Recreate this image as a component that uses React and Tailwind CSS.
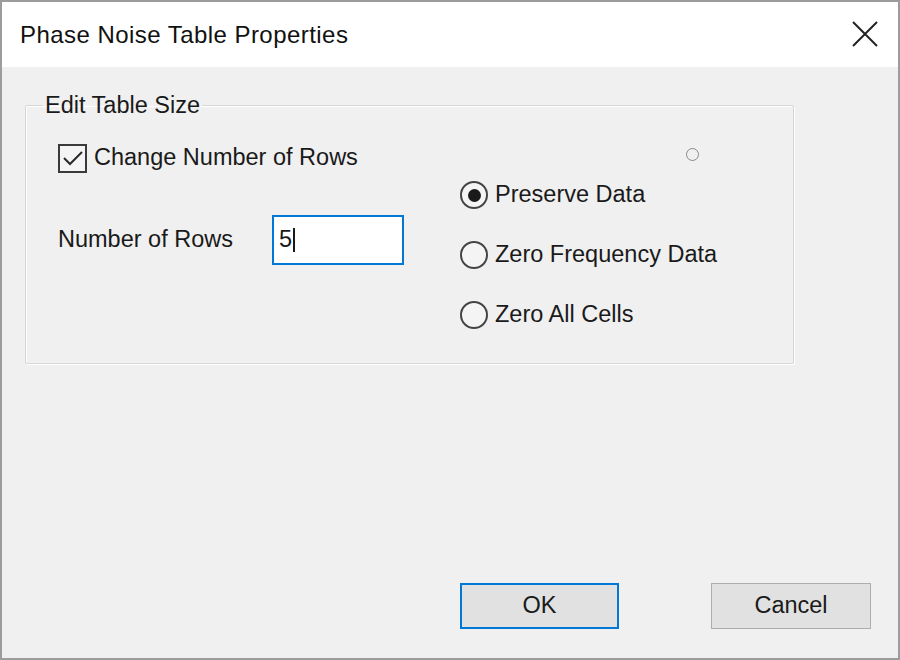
import React from 'react';

const font = { fontFamily: '"Liberation Sans", Arial, sans-serif' };

function Radio({ checked, label }) {
    return (
        <div className="flex items-center h-[30px]">
            <div className="w-[28px] h-[28px] rounded-full border-2 border-[#444] bg-[#f4f4f4] flex items-center justify-center">
                {checked && <div className="w-[13px] h-[13px] rounded-full bg-[#1a1a1a]" />}
            </div>
            <span className="ml-[7px] text-[23.5px] text-[#1a1a1a] leading-none">{label}</span>
        </div>
    );
}

export default function App() {
    return (
        <div className="w-[900px] h-[660px] flex flex-col border-2 border-[#9c9c9c] bg-[#f0f0f0] overflow-hidden" style={font}>
            {/* Title bar */}
            <div className="h-[65px] bg-white flex items-center justify-between pl-[18px] pr-[20px] shrink-0">
                <span className="text-[24px] text-[#111] tracking-[0.45px]">Phase Noise Table Properties</span>
                <svg width="26" height="26" viewBox="0 0 26 26" className="mb-[2px]">
                    <path d="M1 1 L25 25 M25 1 L1 25" stroke="#222" strokeWidth="2" fill="none" />
                </svg>
            </div>

            {/* Body */}
            <div className="flex-1 flex flex-col pt-[25px] pl-[23px] pr-[104px] pb-[29px]">
                <fieldset className="border border-[#d6d6d6] rounded-[2px] shadow-[inset_1px_1px_0_#fff,1px_1px_0_#fff]">
                    <legend className="ml-[17px] px-[2px] text-[23.5px] leading-[26px] text-[#1a1a1a]">Edit Table Size</legend>
                    <div className="flex h-[245px]">
                        {/* Left column */}
                        <div className="w-[434px] pl-[32px] pt-[25px] flex flex-col">
                            <div className="flex items-center h-[30px]">
                                <div className="w-[29px] h-[29px] border-2 border-[#3a3a3a] bg-[#f4f4f4] flex items-center justify-center">
                                    <svg width="22" height="18" viewBox="0 0 22 18">
                                        <path d="M2 9 L8 15 L20 3" stroke="#2a2a2a" strokeWidth="2" fill="none" />
                                    </svg>
                                </div>
                                <span className="ml-[7px] text-[23.5px] text-[#1a1a1a] leading-none">Change Number of Rows</span>
                            </div>
                            <div className="flex items-center h-[50px] mt-[42px]">
                                <span className="w-[214px] text-[23.5px] text-[#1a1a1a] leading-none">Number of Rows</span>
                                <div className="w-[132px] h-[50px] bg-white border-2 border-[#0078d7] flex items-center pl-[5px]">
                                    <span className="text-[23.5px] text-[#1a1a1a] leading-none">5</span>
                                    <span className="w-[2px] h-[24px] bg-[#1a1a1a] ml-[1px]" />
                                </div>
                            </div>
                        </div>

                        {/* Right column */}
                        <div className="flex flex-col">
                            <div className="ml-[226px] mt-[30px] w-[13px] h-[13px] rounded-full border border-[#8a8a8a]" />
                            <div className="flex flex-col gap-[30px] mt-[19px]">
                                <Radio checked label="Preserve Data" />
                                <Radio label="Zero Frequency Data" />
                                <Radio label="Zero All Cells" />
                            </div>
                        </div>
                    </div>
                </fieldset>

                <div className="flex-1" />

                {/* Buttons */}
                <div className="flex justify-end gap-[92px] mr-[-77px]">
                    <button className="w-[159px] h-[46px] bg-[#e1e1e1] border-2 border-[#0078d7] text-[23.5px] text-[#1a1a1a]">OK</button>
                    <button className="w-[160px] h-[46px] bg-[#e1e1e1] border border-[#adadad] text-[23.5px] text-[#1a1a1a]">Cancel</button>
                </div>
            </div>
        </div>
    );
}
